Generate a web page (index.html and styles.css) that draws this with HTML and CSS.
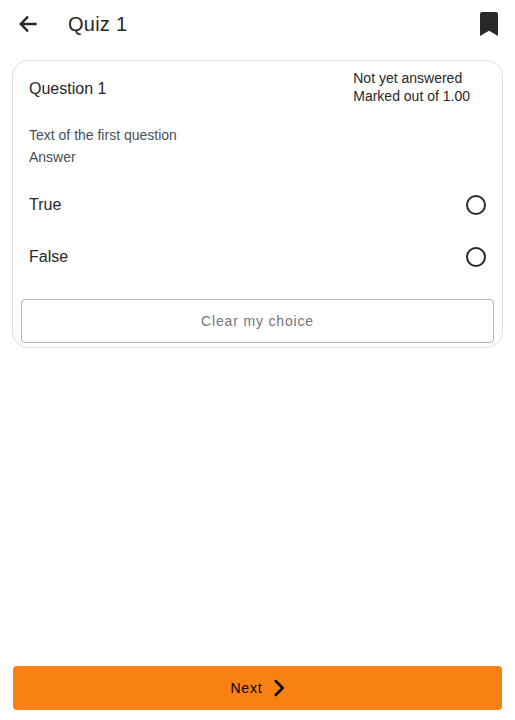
FILE: index.html
```html
<!DOCTYPE html>
<html lang="en">
<head>
<meta charset="utf-8">
<title>Quiz 1</title>
<link rel="stylesheet" href="styles.css">
</head>
<body>
<header class="toolbar">
  <svg class="back" viewBox="0 0 24 24"><path d="M12 4.7L4.8 12l7.2 7.3M5 12h15.6"/></svg>
  <h1 class="title">Quiz 1</h1>
  <svg class="bookmark" viewBox="0 0 18 24"><path d="M2 0h14a2 2 0 0 1 2 2v22l-9-5.2L0 24V2a2 2 0 0 1 2-2z"/></svg>
</header>
<main class="card">
  <div class="card-header">
    <h2 class="question">Question 1</h2>
    <div class="status"><div>Not yet answered</div><div>Marked out of 1.00</div></div>
  </div>
  <div class="prompt"><div>Text of the first question</div><div>Answer</div></div>
  <div class="option"><span>True</span><span class="radio"></span></div>
  <div class="option"><span>False</span><span class="radio"></span></div>
  <button class="clear">Clear my choice</button>
</main>
<footer class="footer">
  <button class="next"><span>Next</span><svg class="chevron" viewBox="0 0 18 18"><path d="M5.7 2l7 7-7 7"/></svg></button>
</footer>
</body>
</html>
```
FILE: styles.css
```css
* { box-sizing: border-box; }
body {
  margin: 0;
  height: 720px;
  display: flex;
  flex-direction: column;
  background: #fff;
  color: #282828;
  font-family: "Liberation Sans", Arial, sans-serif;
}
.toolbar {
  height: 48px;
  display: flex;
  align-items: center;
  padding: 0 17px 0 16px;
}
.back {
  width: 24px;
  height: 24px;
  fill: none;
  stroke: #282828;
  stroke-width: 2.4;
}
.title {
  flex: 1;
  margin: 0 0 0 28px;
  font-size: 20px;
  font-weight: 400;
  letter-spacing: 0.24px;
}
.bookmark { width: 18px; height: 24px; fill: #282828; }
.card {
  height: 288px;
  margin: 12px 12px 0;
  border: 1px solid #dfdfe3;
  border-radius: 16px;
}
.card-header {
  height: 56px;
  display: flex;
  align-items: center;
  justify-content: space-between;
  padding: 0 32px 0 16px;
}
.question { margin: 0; font-size: 16px; font-weight: 400; }
.status { font-size: 14px; line-height: 18px; margin-top: -4px; }
.prompt {
  padding: 7px 16px 0;
  height: 62px;
  color: #495057;
  font-size: 14px;
  line-height: 22px;
}
.option {
  height: 52px;
  padding: 0 16px;
  display: flex;
  align-items: center;
  justify-content: space-between;
  font-size: 16px;
}
.radio {
  width: 20px;
  height: 20px;
  border: 2px solid #282828;
  border-radius: 50%;
}
button { font-family: inherit; font-size: 14px; letter-spacing: 0.84px; }
.clear {
  display: block;
  width: 473px;
  height: 44px;
  margin: 16px 8px 0;
  background: #fff;
  border: 1px solid #b3b3bb;
  border-radius: 4px;
  color: #757575;
}
.footer { margin-top: auto; padding: 0 13px 10px; }
.next {
  display: flex;
  align-items: center;
  justify-content: center;
  width: 100%;
  height: 44px;
  padding: 0 0 0 3.5px;
  border: 0;
  border-radius: 4px;
  background: #f98012;
  color: #000;
}
.chevron {
  width: 18px;
  height: 18px;
  margin-left: 7.5px;
  fill: none;
  stroke: #000;
  stroke-width: 2.5;
  stroke-linecap: round;
  stroke-linejoin: round;
}
```
